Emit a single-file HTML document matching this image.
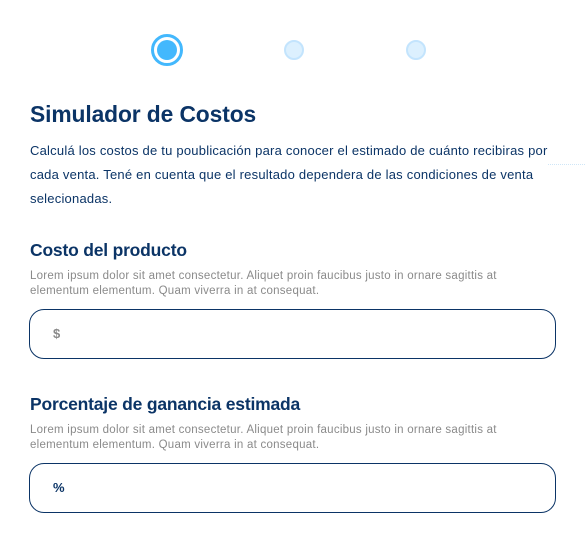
<!DOCTYPE html>
<html><head><meta charset="utf-8"><style>
body{margin:0;width:585px;height:547px;background:#fff;font-family:"Liberation Sans",sans-serif;position:relative;overflow:hidden;color:#0b3466}
.a{position:absolute;white-space:nowrap}
.c{position:absolute;border-radius:50%;box-sizing:border-box}
h1{position:absolute;left:30px;top:101px;margin:0;font-size:22.8px;font-weight:bold;letter-spacing:-0.1px}
.p{left:30px;font-size:13px;letter-spacing:0.22px;color:#0b3466}
.h{left:30px;font-size:17.5px;font-weight:bold;letter-spacing:-0.2px}
.l{left:30px;font-size:11.5px;letter-spacing:0.25px;color:#8a8a8a}
.in{position:absolute;left:29px;width:527px;height:50px;border:1.3px solid #0b3466;border-radius:15px;box-sizing:border-box}
</style></head><body>
<div class="c" style="left:151px;top:34px;width:32px;height:32px;border:3px solid #43b8fd"></div>
<div class="c" style="left:157px;top:40px;width:20px;height:20px;background:#43b8fd"></div>
<div class="c" style="left:284px;top:40px;width:20px;height:20px;background:#dcf0fe;border:2px solid #c3e4fd"></div>
<div class="c" style="left:406px;top:40px;width:20px;height:20px;background:#dcf0fe;border:2px solid #c3e4fd"></div>
<h1>Simulador de Costos</h1>
<div class="a p" style="top:143px">Calculá los costos de tu poublicación para conocer el estimado de cuánto recibiras por</div>
<div class="a p" style="top:167px">cada venta. Tené en cuenta que el resultado dependera de las condiciones de venta</div>
<div class="a p" style="top:191px">selecionadas.</div>
<div class="a" style="left:548px;top:164px;width:37px;border-top:1px dotted #cfe6f7"></div>
<div class="a h" style="top:240px">Costo del producto</div>
<div class="a l" style="top:270px">Lorem ipsum dolor sit amet consectetur. Aliquet proin faucibus justo in ornare sagittis at</div>
<div class="a l" style="top:285px">elementum elementum. Quam viverra in at consequat.</div>
<div class="in" style="top:309px"></div>
<div class="a" style="left:53px;top:326px;font-size:13px;font-weight:bold;color:#8a8a8a">$</div>
<div class="a h" style="top:394px">Porcentaje de ganancia estimada</div>
<div class="a l" style="top:424px">Lorem ipsum dolor sit amet consectetur. Aliquet proin faucibus justo in ornare sagittis at</div>
<div class="a l" style="top:439px">elementum elementum. Quam viverra in at consequat.</div>
<div class="in" style="top:463px"></div>
<div class="a" style="left:53px;top:480px;font-size:13px;font-weight:bold;color:#0b3466">%</div>
</body></html>
